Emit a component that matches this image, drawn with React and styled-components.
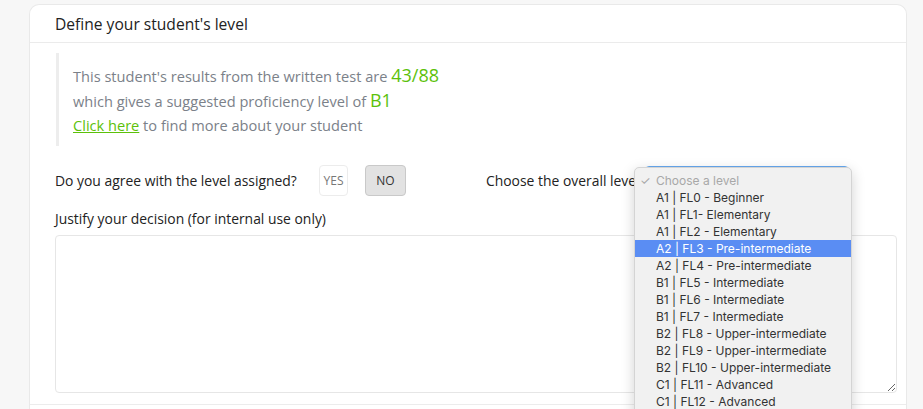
import React from "react";
import styled, { createGlobalStyle } from "styled-components";

const Global = createGlobalStyle`
  html, body { margin: 0; padding: 0; background: #f7f7f7; }
  body { font-family: "Open Sans", "Lato", sans-serif; overflow: hidden; }
  * { box-sizing: border-box; }
`;

const Page = styled.div`
  width: 923px;
  height: 409px;
  padding: 4px 16px 0 29px;
  background: #f7f7f7;
`;

const Card = styled.div`
  background: #fff;
  border: 1px solid #e9e9e9;
  border-bottom: none;
  border-radius: 10px 10px 0 0;
  height: 405px;
  display: flex;
  flex-direction: column;
`;

const CardHeader = styled.div`
  height: 38px;
  flex: none;
  display: flex;
  align-items: center;
  padding-left: 25px;
  font-family: "Open Sans", sans-serif;
  font-size: 15.6px;
  color: #222;
  border-bottom: 1px solid #ebebeb;
`;

const CardBody = styled.div`
  padding: 10px 9px 0 25px;
  height: 362px;
  flex: none;
  border-bottom: 1px solid #ececec;
`;

const CardFooter = styled.div`
  flex: 1;
`;

const Quote = styled.div`
  margin-left: 1px;
  border-left: 3px solid #ededed;
  padding: 10px 0 8px 14px;
  font-family: "Open Sans", sans-serif;
  font-size: 14.6px;
  color: #7b8189;
  line-height: 25px;
`;

const QuoteLine = styled.div`
  height: 25px;
`;

const Score = styled.span`
  color: #5cc10a;
  font-size: 18px;
`;

const Link = styled.a`
  color: #5cc10a;
  text-decoration: underline;
`;

const Row = styled.div`
  margin-top: 19px;
  height: 31px;
  display: flex;
  align-items: center;
  font-family: "Open Sans", sans-serif;
  font-size: 13.9px;
  color: #222;
`;

const Label = styled.span`
  width: 264px;
`;

const Toggle = styled.button`
  height: 31px;
  width: ${(p) => (p.$active ? "41px" : "29px")};
  padding: 0;
  margin-right: ${(p) => (p.$active ? "0" : "17px")};
  border-radius: 4px;
  border: 1px solid ${(p) => (p.$active ? "#c9c9c9" : "#ececec")};
  background: ${(p) => (p.$active ? "#e2e2e2" : "#fff")};
  color: ${(p) => (p.$active ? "#333" : "#777")};
  font-family: "Open Sans", sans-serif;
  font-size: 12px;
`;

const Spacer = styled.div`
  width: 80px;
`;

const SelectWrap = styled.div`
  position: relative;
  display: flex;
  align-items: center;
  height: 31px;
`;

const SelectLabel = styled.span`
  width: 159px;
`;

const SelectBox = styled.div`
  width: 204px;
  height: 31px;
  border: 1px solid #67a9f0;
  border-radius: 4px;
  background: #fff;
  align-self: flex-start;
  margin-top: 1px;
`;

const Menu = styled.div`
  position: absolute;
  left: 148px;
  top: 2px;
  width: 218px;
  padding-top: 4px;
  height: 260px;
  background: #f1f1f1;
  border: 1px solid #d4d4d4;
  border-radius: 5px;
  box-shadow: 0 4px 14px rgba(0, 0, 0, 0.18);
  font-family: "Inter", "Liberation Sans", sans-serif;
  font-size: 12px;
  z-index: 5;
  overflow: hidden;
`;

const Option = styled.div`
  height: 17px;
  line-height: 17px;
  padding-left: 21px;
  position: relative;
  color: ${(p) => (p.$placeholder ? "#a8a8a8" : p.$active ? "#fff" : "#333")};
  background: ${(p) => (p.$active ? "#5a8df3" : "transparent")};
  white-space: nowrap;
`;

const Check = styled.span`
  position: absolute;
  left: 5px;
  top: 0;
  color: #a8a8a8;
  font-size: 12px;
`;

const JustifyLabel = styled.div`
  margin-top: 13px;
  font-family: "Open Sans", sans-serif;
  font-size: 13.9px;
  color: #222;
  height: 20px;
  line-height: 20px;
`;

const TextArea = styled.textarea`
  display: block;
  margin-top: 6px;
  width: 842px;
  height: 158px;
  border: 1px solid #e6e6e6;
  border-radius: 4px;
  resize: both;
  outline: none;
  background: #fff;
`;

const options = [
  "A1 | FL0 - Beginner",
  "A1 | FL1- Elementary",
  "A1 | FL2 - Elementary",
  "A2 | FL3 - Pre-intermediate",
  "A2 | FL4 - Pre-intermediate",
  "B1 | FL5 - Intermediate",
  "B1 | FL6 - Intermediate",
  "B1 | FL7 - Intermediate",
  "B2 | FL8 - Upper-intermediate",
  "B2 | FL9 - Upper-intermediate",
  "B2 | FL10 - Upper-intermediate",
  "C1 | FL11 - Advanced",
  "C1 | FL12 - Advanced",
];

export default function App() {
  return (
    <>
      <Global />
      <Page>
        <Card>
          <CardHeader>Define your student's level</CardHeader>
          <CardBody>
            <Quote>
              <QuoteLine>
                This student's results from the written test are <Score>43/88</Score>
              </QuoteLine>
              <QuoteLine>
                which gives a suggested proficiency level of <Score>B1</Score>
              </QuoteLine>
              <QuoteLine>
                <Link>Click here</Link> to find more about your student
              </QuoteLine>
            </Quote>
            <Row>
              <Label>Do you agree with the level assigned?</Label>
              <Toggle>YES</Toggle>
              <Toggle $active>NO</Toggle>
              <Spacer />
              <SelectWrap>
                <SelectLabel>Choose the overall level</SelectLabel>
                <SelectBox />
                <Menu>
                  <Option $placeholder>
                    <Check>✓</Check>Choose a level
                  </Option>
                  {options.map((o, i) => (
                    <Option key={o} $active={i === 3}>
                      {o}
                    </Option>
                  ))}
                </Menu>
              </SelectWrap>
            </Row>
            <JustifyLabel>Justify your decision (for internal use only)</JustifyLabel>
            <TextArea />
          </CardBody>
          <CardFooter />
        </Card>
      </Page>
    </>
  );
}
